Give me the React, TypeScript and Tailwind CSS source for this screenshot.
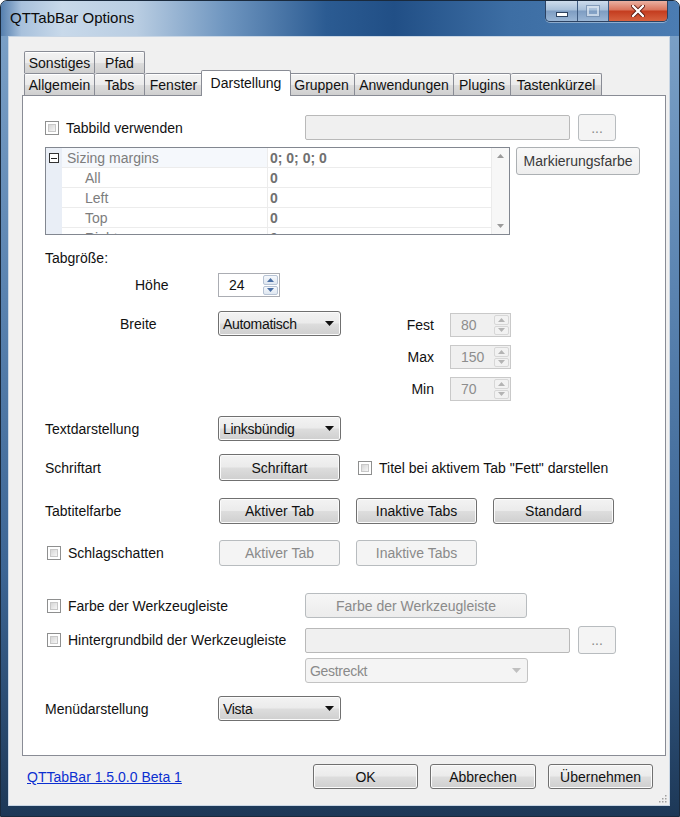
import React from "react";

const FONT = "font-['Liberation_Sans',Arial,sans-serif]";

function Btn({ children, w, h, disabled, soft, className = "" }: { children?: React.ReactNode; w: number; h: number; disabled?: boolean; soft?: boolean; className?: string }) {
  const base = "flex items-center justify-center rounded-[3px] border text-[14px] leading-none shrink-0";
  const style = disabled
    ? "border-[#b8bcbf] bg-[#f4f4f4] text-[#8a8a8a]"
    : soft
    ? "border-[#acb0b3] bg-[linear-gradient(180deg,#f8f8f8,#eeeeee)] text-[#3a3a3a]"
    : "border-[#707070] bg-[linear-gradient(180deg,#f3f3f3_0%,#ebebeb_48%,#dddddd_52%,#cfcfcf_100%)] text-[#111] shadow-[inset_0_0_0_1px_#fbfbfb]";
  return (
    <div className={`${base} ${style} ${className}`} style={{ width: w, height: h }}>
      {children}
    </div>
  );
}

function Check({ className = "" }: { className?: string }) {
  return (
    <div className={`w-[14px] h-[14px] border border-[#8e8f8f] bg-white p-[2px] shrink-0 ${className}`}>
      <div className="w-full h-full bg-[linear-gradient(135deg,#d6d6d6,#f6f6f6)] border border-[#c8c8c8]" />
    </div>
  );
}

function Arrow({ color = "#111" }: { color?: string }) {
  return (
    <svg width="9" height="5" viewBox="0 0 9 5">
      <path d="M0 0 H9 L4.5 5 Z" fill={color} />
    </svg>
  );
}

function Combo({ value, w, disabled }: { value: string; w: number; disabled?: boolean }) {
  return (
    <div
      className={`flex items-center justify-between rounded-[3px] border pl-[4px] pr-[6px] text-[14px] leading-none shrink-0 ${
        disabled
          ? "border-[#c3c3c3] bg-[#f4f4f4] text-[#8a8a8a]"
          : "border-[#707070] bg-[linear-gradient(180deg,#f3f3f3_0%,#ebebeb_48%,#dddddd_52%,#cfcfcf_100%)] text-[#111] shadow-[inset_0_0_0_1px_#fbfbfb]"
      }`}
      style={{ width: w, height: 25 }}
    >
      <span className="tracking-[-0.3px]">{value}</span>
      <Arrow color={disabled ? "#c0c0c0" : "#111"} />
    </div>
  );
}

function SpinBtn({ up, disabled }: { up?: boolean; disabled?: boolean }) {
  return (
    <div
      className={`flex-1 flex items-center justify-center border rounded-[2px] ${
        disabled ? "border-[#d7d7d7] bg-[#f2f2f2]" : "border-[#b7c3d4] bg-[linear-gradient(180deg,#f5f8fc,#dfe7f1)]"
      }`}
    >
      <svg width="7" height="4" viewBox="0 0 7 4">
        {up ? (
          <path d="M0 4 L3.5 0 L7 4 Z" fill={disabled ? "#b4b4b4" : "#4a6fa5"} />
        ) : (
          <path d="M0 0 L7 0 L3.5 4 Z" fill={disabled ? "#b4b4b4" : "#4a6fa5"} />
        )}
      </svg>
    </div>
  );
}

function Spinner({ value, w, disabled }: { value: string; w: number; disabled?: boolean }) {
  return (
    <div
      className={`flex items-stretch border text-[14px] leading-none shrink-0 ${
        disabled ? "border-[#c9c9c9] bg-[#f0f0f0] text-[#8d8d8d]" : "border-[#abadb3] bg-white text-[#111]"
      }`}
      style={{ width: w, height: 24 }}
    >
      <div className="flex-1 flex items-center pl-[10px]">{value}</div>
      <div className="w-[17px] flex flex-col gap-[1px] p-[1px]">
        <SpinBtn up disabled={disabled} />
        <SpinBtn disabled={disabled} />
      </div>
    </div>
  );
}

function TextBox({ w, h = 25 }: { w: number; h?: number }) {
  return <div className="rounded-[2px] border border-[#b9b9b9] bg-[#f0f0f0] shrink-0" style={{ width: w, height: h }} />;
}

function Tab({ label, w, selected }: { label: string; w: number; selected?: boolean }) {
  if (selected) {
    return (
      <div
        className="relative z-10 h-[26px] -mb-px -mx-[2px] flex items-start justify-center pt-[5px] border border-b-0 border-[#898c95] bg-white text-[14px] leading-none text-[#111] rounded-t-[2px]"
        style={{ width: w + 4 }}
      >
        {label}
      </div>
    );
  }
  return (
    <div
      className="h-[22px] flex items-center justify-center border border-b-0 border-l-0 first:border-l border-[#898c95] bg-[linear-gradient(180deg,#f3f3f3_0%,#ebebeb_50%,#dddddd_51%,#cfcfcf_100%)] text-[14px] leading-none text-[#111] rounded-t-[2px] shadow-[inset_0_1px_0_#fff]"
      style={{ width: w }}
    >
      {label}
    </div>
  );
}

function PropertyGrid() {
  const rows = [
    { name: "Sizing margins", value: "0; 0; 0; 0", top: true },
    { name: "All", value: "0" },
    { name: "Left", value: "0" },
    { name: "Top", value: "0" },
    { name: "Right", value: "0" },
  ];
  return (
    <div className="w-[465px] h-[88px] border border-[#828790] bg-white flex overflow-hidden shrink-0">
      <div className="flex-1 flex flex-col overflow-hidden">
        {rows.map((r) => (
          <div key={r.name} className="h-[20px] shrink-0 flex text-[14px] leading-none">
            <div className="w-[16px] bg-[#e9eef6] flex items-center justify-center">
              {r.top && (
                <div className="w-[10px] h-[10px] border border-[#333] bg-white flex items-center justify-center">
                  <div className="w-[6px] h-[1px] bg-[#222]" />
                </div>
              )}
            </div>
            <div
              className={`w-[206px] flex items-center border-b border-r border-[#ececec] text-[#7d7d7d] ${
                r.top ? "pl-[5px] bg-[#f5f8fc]" : "pl-[23px]"
              }`}
            >
              {r.name}
            </div>
            <div className="flex-1 flex items-center pl-[2px] border-b border-[#ececec] font-bold text-[#707070]">{r.value}</div>
          </div>
        ))}
      </div>
      <div className="w-[18px] bg-[#f7f7f7] border-l border-[#ebebeb] flex flex-col items-center justify-between py-[6px]">
        <svg width="7" height="4" viewBox="0 0 7 4">
          <path d="M0 4 L3.5 0 L7 4 Z" fill="#9a9a9a" />
        </svg>
        <svg width="7" height="4" viewBox="0 0 7 4">
          <path d="M0 0 L7 0 L3.5 4 Z" fill="#9a9a9a" />
        </svg>
      </div>
    </div>
  );
}

export default function App() {
  return (
    <div className={`${FONT} w-[680px] h-[817px] flex flex-col border border-[#1a2a3d] rounded-t-[7px] overflow-hidden bg-[linear-gradient(180deg,#7ea3c9_0%,#5b84b1_35%,#3c6594_70%,#1d3857_100%)]`}>
      {/* Title bar */}
      <div className="h-[35px] shrink-0 flex items-start bg-[linear-gradient(90deg,#557fae_0%,#a8c1dc_3%,#c8d9ea_9%,#b9cde2_20%,#6f96c0_33%,#2b5b92_48%,#214f86_58%,#3d6ea4_75%,#4b7cb2_100%)]">
        <div className="ml-[9px] mt-[9px] text-[15px] leading-none text-[#0b0b0b]">QTTabBar Options</div>
        <div className="ml-auto mr-[11px] flex h-[21px] rounded-b-[5px] border border-t-0 border-[#2c4262] overflow-hidden shadow-[0_1px_0_rgba(255,255,255,0.4)]">
          <div className="w-[32px] flex items-center justify-center border-r border-[#3d5a80] bg-[linear-gradient(180deg,#cddcec_0%,#a7bfd9_45%,#7e9dc2_50%,#9ab6d5_100%)]">
            <div className="w-[12px] h-[5px] mt-[6px] bg-white border border-[#2d425f]" />
          </div>
          <div className="w-[31px] flex items-center justify-center border-r border-[#3d5a80] bg-[linear-gradient(180deg,#cddcec_0%,#a7bfd9_45%,#7e9dc2_50%,#9ab6d5_100%)]">
            <div className="w-[12px] h-[10px] border-[2px] border-[#dfe8f2] opacity-70 shadow-[0_0_0_1px_#6f89aa]" />
          </div>
          <div className="w-[58px] flex items-center justify-center bg-[linear-gradient(180deg,#eab1a2_0%,#d9745c_45%,#c43c1f_50%,#d6613f_100%)]">
            <svg width="14" height="12" viewBox="0 0 14 12">
              <path d="M2 1 L12 11 M12 1 L2 11" stroke="#5a1a10" strokeWidth="4" strokeLinecap="round" />
              <path d="M2 1 L12 11 M12 1 L2 11" stroke="#ffffff" strokeWidth="2.4" strokeLinecap="round" />
            </svg>
          </div>
        </div>
      </div>

      {/* Client area */}
      <div className="ml-[7px] w-[662px] h-[770px] bg-[#f0f0f0] border border-[#c9d6e4] flex flex-col">
        {/* Tab strip */}
        <div className="mt-[15px] ml-[15px] flex flex-col">
          <div className="flex h-[21px] items-end">
            <Tab label="Sonstiges" w={71} />
            <Tab label="Pfad" w={50} />
          </div>
          <div className="flex h-[22px] items-end">
            <Tab label="Allgemein" w={71} />
            <Tab label="Tabs" w={50} />
            <Tab label="Fenster" w={58} />
            <Tab label="Darstellung" w={86} selected />
            <Tab label="Gruppen" w={66} />
            <Tab label="Anwendungen" w={99} />
            <Tab label="Plugins" w={57} />
            <Tab label="Tastenkürzel" w={91} />
          </div>
        </div>

        {/* Tab page */}
        <div className="ml-[13px] w-[644px] h-[661px] border border-[#898c95] bg-white flex flex-col text-[14px] leading-none text-[#111]">
          {/* Tabbild verwenden */}
          <div className="mt-[18px] h-[27px] flex items-center">
            <div className="w-[282px] pl-[22px] flex items-center gap-[7px]">
              <Check />
              <span>Tabbild verwenden</span>
            </div>
            <TextBox w={265} />
            <Btn w={38} h={27} disabled className="ml-[8px] text-[11px]">...</Btn>
          </div>

          {/* Property grid */}
          <div className="mt-[6px] pl-[22px] flex items-start">
            <PropertyGrid />
            <Btn w={124} h={28} soft className="ml-[6px]">Markierungsfarbe</Btn>
          </div>

          {/* Tabgröße */}
          <div className="mt-[13px] h-[20px] pl-[22px] flex items-center">Tabgröße:</div>

          {/* Höhe */}
          <div className="mt-[5px] h-[24px] flex items-center">
            <div className="w-[195px] pl-[112px]">Höhe</div>
            <Spinner value="24" w={62} />
          </div>

          {/* Breite + Fest/Max/Min */}
          <div className="mt-[14px] flex items-start">
            <div className="w-[195px] h-[25px] pl-[97px] flex items-center">Breite</div>
            <Combo value="Automatisch" w={123} />
            <div className="ml-[39px] mt-[2px] flex flex-col gap-[8px]">
              {[
                ["Fest", "80"],
                ["Max", "150"],
                ["Min", "70"],
              ].map(([l, v]) => (
                <div key={l} className="h-[24px] flex items-center">
                  <div className="w-[54px] text-right">{l}</div>
                  <div className="ml-[16px]">
                    <Spinner value={v} w={61} disabled />
                  </div>
                </div>
              ))}
            </div>
          </div>

          {/* Textdarstellung */}
          <div className="mt-[15px] h-[25px] flex items-center">
            <div className="w-[195px] pl-[22px]">Textdarstellung</div>
            <Combo value="Linksbündig" w={123} />
          </div>

          {/* Schriftart */}
          <div className="mt-[13px] h-[27px] flex items-center">
            <div className="w-[196px] pl-[22px]">Schriftart</div>
            <Btn w={121} h={27}>Schriftart</Btn>
            <Check className="ml-[18px]" />
            <span className="ml-[7px]">Titel bei aktivem Tab "Fett" darstellen</span>
          </div>

          {/* Tabtitelfarbe */}
          <div className="mt-[17px] h-[26px] flex items-center">
            <div className="w-[196px] pl-[22px]">Tabtitelfarbe</div>
            <div className="flex gap-[16px]">
              <Btn w={121} h={26}>Aktiver Tab</Btn>
              <Btn w={121} h={26}>Inaktive Tabs</Btn>
              <Btn w={121} h={26}>Standard</Btn>
            </div>
          </div>

          {/* Schlagschatten */}
          <div className="mt-[16px] h-[26px] flex items-center">
            <div className="w-[196px] pl-[24px] flex items-center gap-[7px]">
              <Check />
              <span>Schlagschatten</span>
            </div>
            <div className="flex gap-[16px]">
              <Btn w={121} h={26} disabled>Aktiver Tab</Btn>
              <Btn w={121} h={26} disabled>Inaktive Tabs</Btn>
            </div>
          </div>

          {/* Farbe der Werkzeugleiste */}
          <div className="mt-[27px] h-[25px] flex items-center">
            <div className="w-[282px] pl-[24px] flex items-center gap-[7px]">
              <Check />
              <span>Farbe der Werkzeugleiste</span>
            </div>
            <Btn w={222} h={25} disabled className="bg-[linear-gradient(180deg,#f6f6f6,#ececec)] text-[#7c7c7c]">Farbe der Werkzeugleiste</Btn>
          </div>

          {/* Hintergrundbild */}
          <div className="mt-[8px] h-[28px] flex items-center">
            <div className="w-[282px] pl-[24px] flex items-center gap-[7px]">
              <Check />
              <span>Hintergrundbild der Werkzeugleiste</span>
            </div>
            <TextBox w={265} />
            <Btn w={38} h={28} disabled className="ml-[8px] text-[11px]">...</Btn>
          </div>

          {/* Gestreckt */}
          <div className="mt-[4px] h-[25px] pl-[282px] flex items-center">
            <Combo value="Gestreckt" w={223} disabled />
          </div>

          {/* Menüdarstellung */}
          <div className="mt-[13px] h-[25px] flex items-center">
            <div className="w-[195px] pl-[22px]">Menüdarstellung</div>
            <Combo value="Vista" w={123} />
          </div>
        </div>

        {/* Bottom bar */}
        <div className="flex-1 flex items-start pt-[8px] relative">
          <a className="ml-[18px] mt-[6px] text-[14px] leading-none text-[#0c2fd0] underline">QTTabBar 1.5.0.0 Beta 1</a>
          <div className="ml-auto mr-[16px] flex gap-[12px]">
            <Btn w={105} h={25}>OK</Btn>
            <Btn w={106} h={25}>Abbrechen</Btn>
            <Btn w={105} h={25}>Übernehmen</Btn>
          </div>
          <svg className="absolute right-[2px] bottom-[2px]" width="10" height="10" viewBox="0 0 10 10">
            {[
              [8, 2],
              [8, 5],
              [5, 5],
              [8, 8],
              [5, 8],
              [2, 8],
            ].map(([x, y]) => (
              <rect key={`${x}-${y}`} x={x} y={y} width="1.5" height="1.5" fill="#a0a0a0" />
            ))}
          </svg>
        </div>
      </div>
    </div>
  );
}
